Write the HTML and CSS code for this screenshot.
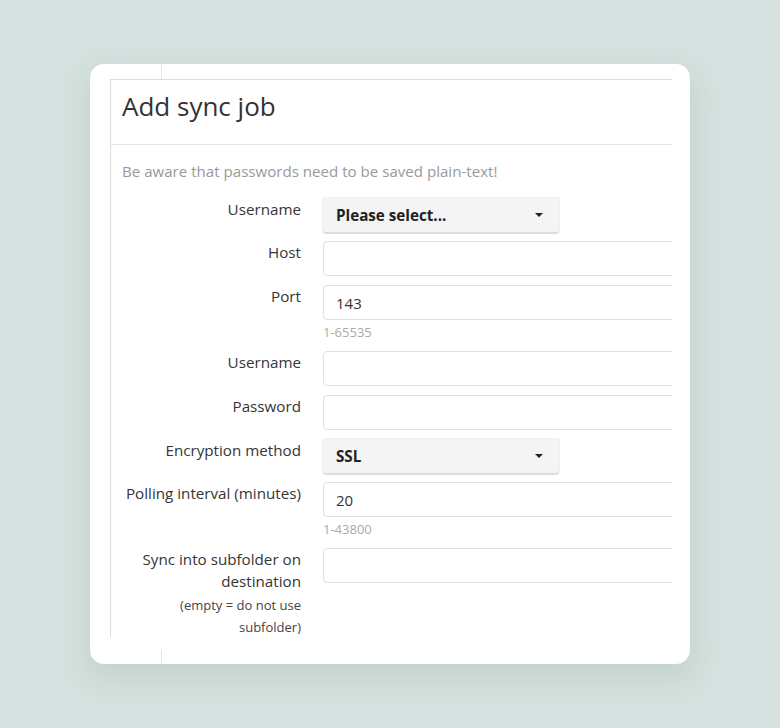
FILE: index.html
```html
<!DOCTYPE html>
<html lang="en">
<head>
    <meta charset="UTF-8">
    <meta name="viewport" content="width=device-width, initial-scale=1.0">
    <title>Add sync job</title>
    <link rel="stylesheet" href="styles.css">
</head>
<body>
    <div class="card">
        <div class="clip">
            <div class="modal">
                <div class="modal-header">
                    <h3>Add sync job</h3>
                </div>
                <div class="modal-body">
                    <p class="warn">Be aware that passwords need to be saved plain-text!</p>
                    <form>
                        <div class="row">
                            <label>Username</label>
                            <div class="field">
                                <div class="select"><b>Please select...</b><span class="caret"></span></div>
                            </div>
                        </div>
                        <div class="row">
                            <label>Host</label>
                            <div class="field"><input type="text"></div>
                        </div>
                        <div class="row">
                            <label>Port</label>
                            <div class="field">
                                <input type="text" value="143">
                                <small>1-65535</small>
                            </div>
                        </div>
                        <div class="row">
                            <label>Username</label>
                            <div class="field"><input type="text"></div>
                        </div>
                        <div class="row">
                            <label>Password</label>
                            <div class="field"><input type="password"></div>
                        </div>
                        <div class="row">
                            <label>Encryption method</label>
                            <div class="field">
                                <div class="select"><b>SSL</b><span class="caret"></span></div>
                            </div>
                        </div>
                        <div class="row">
                            <label>Polling interval (minutes)</label>
                            <div class="field">
                                <input type="text" value="20">
                                <small>1-43800</small>
                            </div>
                        </div>
                        <div class="row">
                            <label>Sync into subfolder on destination<small>(empty = do not use subfolder)</small></label>
                            <div class="field"><input type="text"></div>
                        </div>
                    </form>
                </div>
            </div>
        </div>
    </div>
</body>
</html>
```

FILE: styles.css
```css
body {
    margin: 0;
    min-height: 100vh;
    background: #d4e1de;
    display: flex;
    align-items: center;
    justify-content: center;
    font-family: "Open Sans", "Liberation Sans", sans-serif;
    color: #333;
}

.card {
    width: 600px;
    height: 600px;
    border-radius: 14px;
    background: linear-gradient(#e6e6e6, #e6e6e6) no-repeat 71px 0 / 1px 100%, #fff;
    box-shadow: 0 12px 30px rgba(60, 90, 85, 0.12);
    overflow: hidden;
}

.clip {
    margin: 15px 18px 0 20px;
    height: 571px;
    background: #fff;
    overflow: hidden;
}

.modal {
    width: 640px;
    height: 557px;
    border-top: 1px solid #ddd;
    border-left: 1px solid #ddd;
    overflow: hidden;
}

.modal-header {
    padding: 13px 12px 24px 11px;
    border-bottom: 1px solid #e5e5e5;
}

.modal-header h3 {
    margin: 0;
    font-size: 26px;
    line-height: 27px;
    font-weight: 400;
    color: #333;
}

.modal-body {
    padding: 15px 11px 0;
}

.warn {
    margin: 0 0 16px;
    font-size: 15.1px;
    line-height: 22px;
    color: #999;
}

.row {
    display: flex;
    gap: 22px;
    margin-bottom: 9px;
}

.row.pick {
    margin-bottom: 10px;
}

.row label {
    width: 179px;
    flex: none;
    text-align: right;
    font-size: 15.2px;
    line-height: 22px;
    color: #353535;
}

.row label small {
    display: block;
    margin-top: 2px;
    font-size: 13px;
    line-height: 22px;
    color: #444;
}

.field {
    flex: 1;
}

.field input {
    display: block;
    box-sizing: border-box;
    width: 100%;
    height: 35px;
    margin: 0;
    padding: 0 12px;
    border: 1px solid #e0e0e0;
    border-radius: 4px;
    font-family: inherit;
    font-size: 15px;
    color: #333;
    background: #fff;
}

.field small {
    display: block;
    margin-top: 3px;
    margin-bottom: 1px;
    font-size: 13px;
    line-height: 18px;
    color: #aaa;
}

.select {
    box-sizing: border-box;
    width: 236px;
    height: 34px;
    padding: 0 13px;
    display: flex;
    align-items: center;
    justify-content: space-between;
    background: #f4f4f4;
    border-radius: 3px;
    box-shadow: 0 2px 0 #dcdcdc, 0 0 0 1px #efefef;
    font-size: 15.2px;
    color: #222;
}

.caret {
    width: 0;
    height: 0;
    margin-right: 3px;
    border-left: 4px solid transparent;
    border-right: 4px solid transparent;
    border-top: 4px solid #222;
}
```
